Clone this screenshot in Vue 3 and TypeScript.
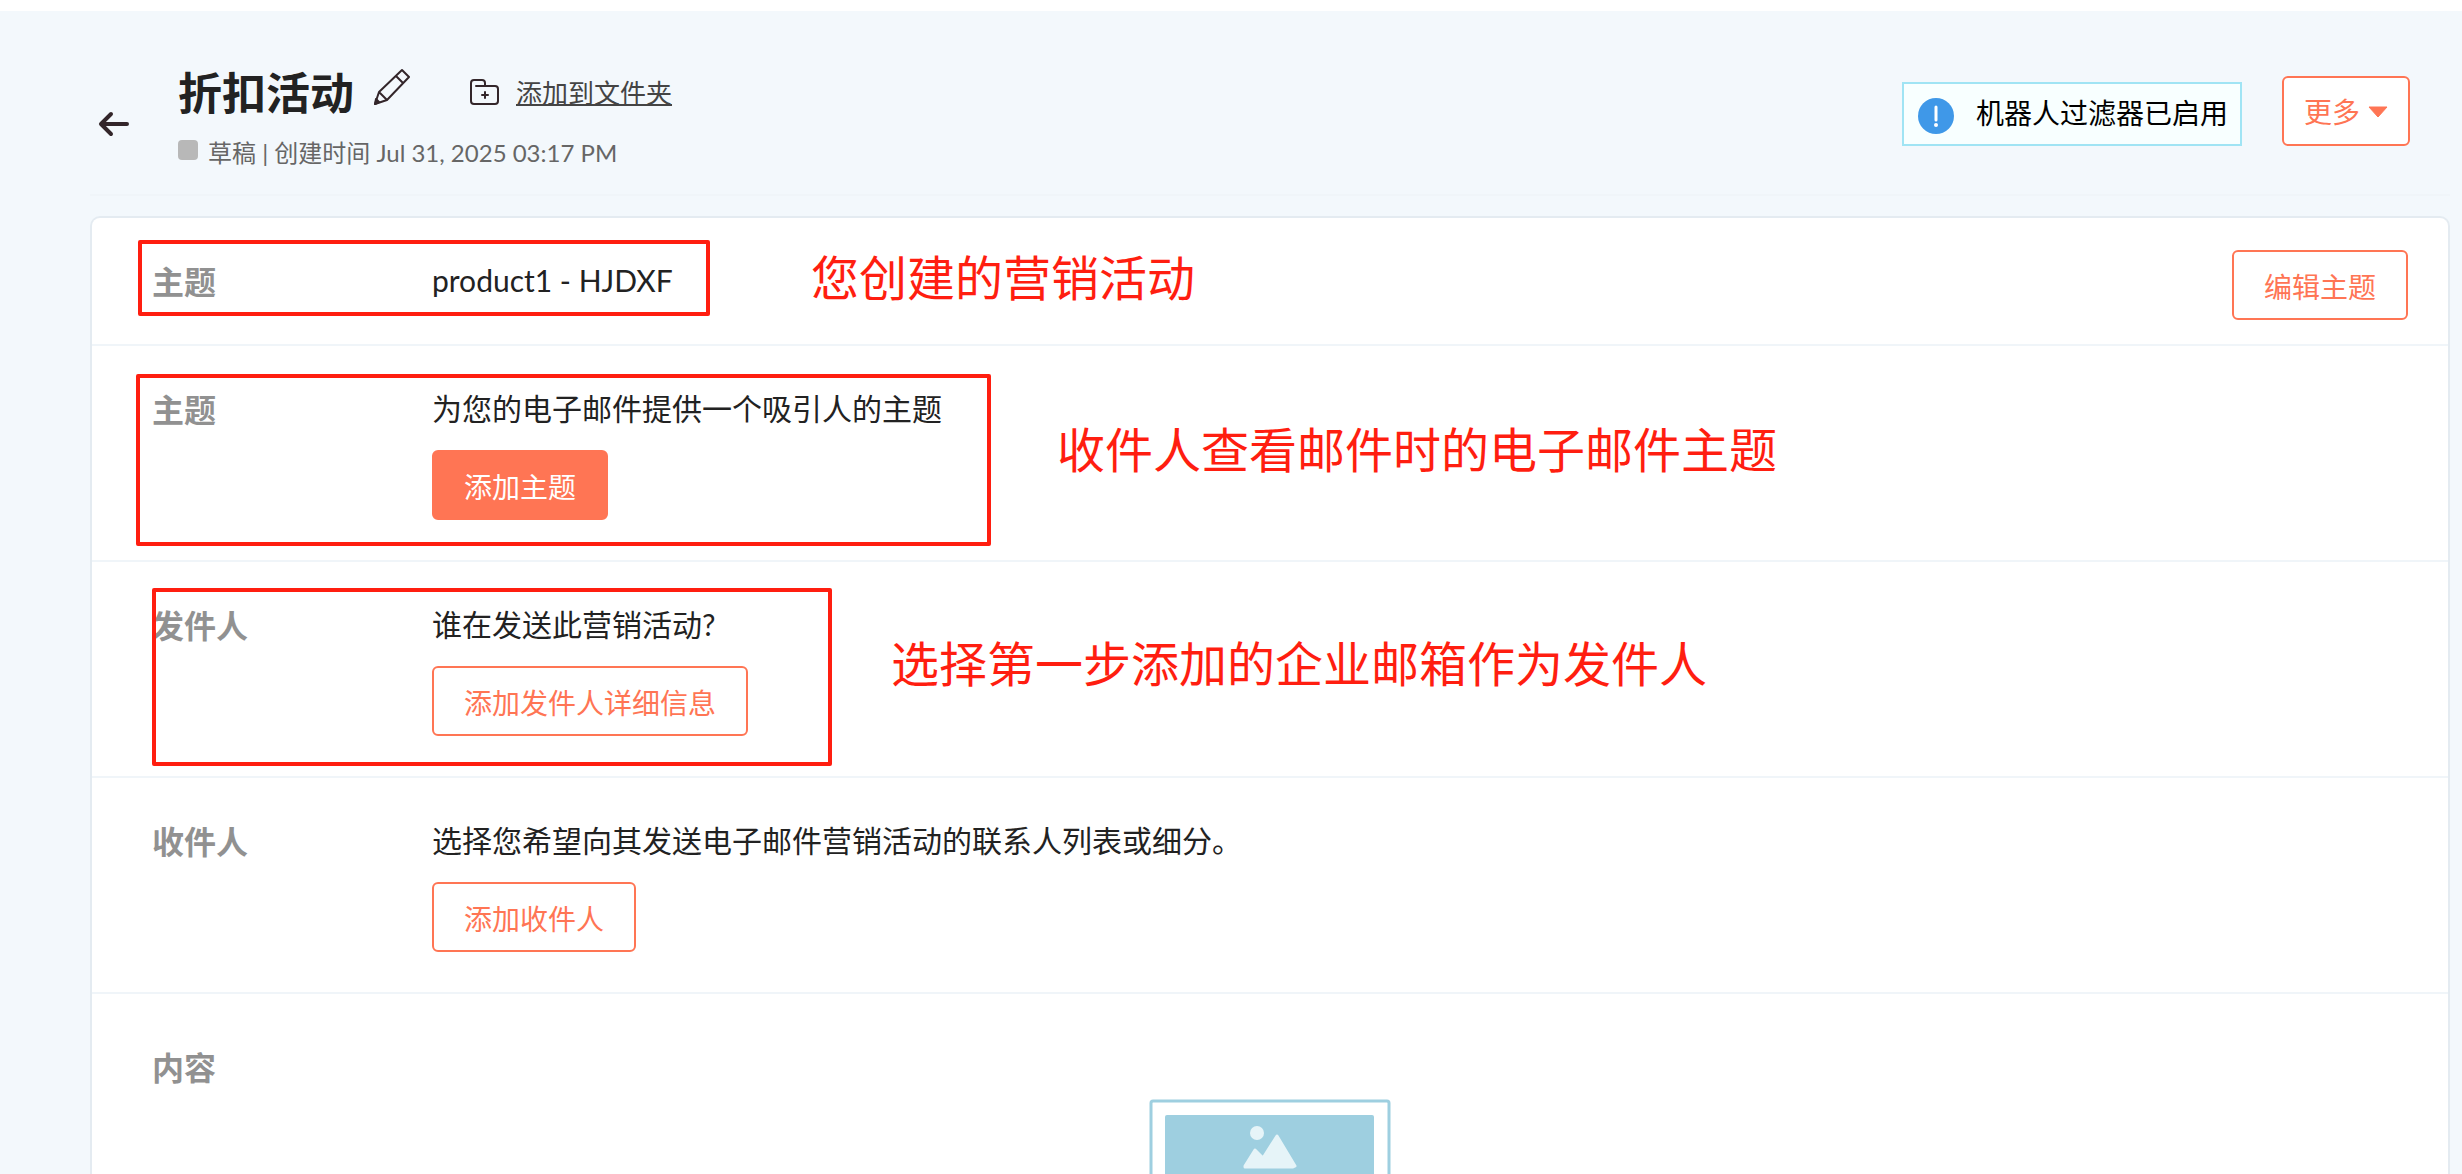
<script setup lang="ts">
interface Step {
  id: string
  label: string
  value: string
  action?: string
  primary?: boolean
  edit?: string
  note?: string
}

const steps: Step[] = [
  { id: 'topic', label: '主题', value: 'product1 - HJDXF', edit: '编辑主题', note: '您创建的营销活动' },
  { id: 'subject', label: '主题', value: '为您的电子邮件提供一个吸引人的主题', action: '添加主题', primary: true, note: '收件人查看邮件时的电子邮件主题' },
  { id: 'sender', label: '发件人', value: '谁在发送此营销活动?', action: '添加发件人详细信息', note: '选择第一步添加的企业邮箱作为发件人' },
  { id: 'recipients', label: '收件人', value: '选择您希望向其发送电子邮件营销活动的联系人列表或细分。', action: '添加收件人' },
]
</script>

<template>
  <div class="page">
    <header class="header">
      <button class="icon-button back" type="button" aria-label="返回">
        <svg width="32" height="28" viewBox="0 0 32 28" fill="none" stroke="#33262a" stroke-width="4" stroke-linecap="round" stroke-linejoin="round">
          <path d="M29 14H4M13 4 3 14l10 10" />
        </svg>
      </button>
      <div class="heading">
        <div class="title-row">
          <h1 class="title">折扣活动</h1>
          <button class="icon-button pencil" type="button" aria-label="编辑名称">
            <svg width="38" height="38" viewBox="0 0 38 38" fill="none" stroke="#33262a" stroke-width="2" stroke-linejoin="round">
              <path d="M1 36 5 24 28 2l7 7-22 23ZM5 24l8 8M22 8l7 7" />
              <path d="m1 36 4-2-3-3Z" fill="#33262a" />
            </svg>
          </button>
          <a class="folder" href="#">
            <svg width="30" height="28" viewBox="0 0 30 28" fill="none" stroke="#33262a" stroke-width="2" stroke-linecap="round" stroke-linejoin="round">
              <path d="M6 7h19q3 0 3 3v12q0 3-3 3H4q-3 0-3-3V4q0-3 3-3h8q3 0 3 3v3M15 13v6M12 16h6" />
            </svg>
            <span class="folder-text">添加到文件夹</span>
          </a>
        </div>
        <div class="meta">
          <span class="status"></span>
          <span>草稿 | 创建时间 Jul 31, 2025 03:17 PM</span>
        </div>
      </div>
      <div class="tools">
        <div class="filter">
          <svg width="36" height="36" viewBox="0 0 36 36">
            <circle cx="18" cy="18" r="18" fill="#3f98e8" />
            <path d="M18 9v13" stroke="#fff" stroke-width="3" stroke-linecap="round" />
            <circle cx="18" cy="27" r="2" fill="#fff" />
          </svg>
          <span class="filter-text">机器人过滤器已启用</span>
        </div>
        <button class="button more" type="button">
          更多
          <svg width="20" height="12" viewBox="0 0 20 12"><path d="M1 1h18l-9 10Z" fill="#ff7554" stroke="#ff7554" stroke-linejoin="round" /></svg>
        </button>
      </div>
    </header>

    <main class="card">
      <section v-for="step in steps" :key="step.id" class="step" :class="step.id">
        <h2 class="label">{{ step.label }}</h2>
        <div class="body">
          <p class="value">{{ step.value }}</p>
          <button v-if="step.action" class="button" :class="{ primary: step.primary }" type="button">{{ step.action }}</button>
        </div>
        <button v-if="step.edit" class="button" type="button">{{ step.edit }}</button>
        <template v-if="step.note">
          <span class="frame"></span>
          <span class="note">{{ step.note }}</span>
        </template>
      </section>
      <section class="content">
        <h2 class="label">内容</h2>
        <svg class="preview" width="242" height="160" viewBox="0 0 242 160">
          <rect x="2" y="2" width="238" height="200" rx="2" fill="#fff" stroke="#9ecfe0" stroke-width="3" />
          <rect x="16" y="16" width="209" height="120" rx="2" fill="#9ecfe0" />
          <circle cx="108" cy="34" r="7" fill="#e6f4f8" />
          <path d="M96 67 106 51l8 8 14-22 18 30-2 1H96Z" fill="#e6f4f8" stroke="#e6f4f8" stroke-width="3" stroke-linejoin="round" />
        </svg>
      </section>
    </main>
  </div>
</template>

<style>
body {
  margin: 0;
}
</style>

<style scoped>
.page {
  box-sizing: border-box;
  display: flex;
  flex-direction: column;
  height: 100vh;
  overflow: hidden;
  padding: 0 12px 0 90px;
  border-top: 11px solid #fff;
  background: #f3f8fc;
  color: #222;
  font-family: Lato, "Noto Sans CJK SC", sans-serif;
}
.header {
  display: flex;
  flex: none;
  align-items: flex-start;
  height: 183px;
  margin-bottom: 20px;
  border-bottom: 2px solid #f0f5f9;
}
.icon-button {
  display: flex;
  padding: 0;
  border: 0;
  background: none;
}
.back {
  width: 88px;
  padding: 99px 0 0 8px;
}
.heading {
  flex: 1;
  padding-top: 50px;
}
.title-row {
  display: flex;
  align-items: center;
  height: 64px;
}
.title {
  margin: 0;
  font-size: 44px;
  line-height: 64px;
  font-weight: 700;
}
.pencil {
  margin: 0 58px 12px 20px;
}
.folder {
  display: flex;
  align-items: center;
  gap: 16px;
  color: #444;
  font-size: 26px;
  line-height: 40px;
  text-decoration: none;
}
.folder-text {
  text-decoration: underline;
  text-decoration-thickness: 2px;
}
.meta {
  display: flex;
  align-items: center;
  gap: 10px;
  margin-top: 10px;
  color: #666;
  font-size: 24px;
  line-height: 36px;
}
.status {
  width: 20px;
  height: 20px;
  margin-bottom: 6px;
  border-radius: 4px;
  background: #b8b8b8;
}
.tools {
  display: flex;
  align-items: flex-end;
  gap: 40px;
  padding: 65px 40px 0 0;
}
.filter {
  box-sizing: border-box;
  display: flex;
  align-items: center;
  gap: 22px;
  height: 64px;
  padding: 0 12px 0 14px;
  border: 2px solid #a0e4f4;
  background: #f8ffff;
  color: #000;
  font-size: 28px;
}
.filter svg {
  margin-top: 4px;
}
.filter-text {
  padding-bottom: 4px;
}
.button {
  box-sizing: border-box;
  display: flex;
  flex: none;
  align-items: center;
  height: 70px;
  padding: 4px 30px 0;
  border: 2px solid #ff7554;
  border-radius: 6px;
  background: #fff;
  color: #ff7554;
  font-family: inherit;
  font-size: 28px;
  line-height: 40px;
}
.primary {
  background: #ff7554;
  color: #fff;
}
.more {
  gap: 8px;
  padding: 2px 20px 0;
}
.card {
  display: flex;
  flex: 1;
  flex-direction: column;
  border: 2px solid #e4ebf1;
  border-bottom: 0;
  border-radius: 10px 10px 0 0;
  background: #fff;
}
.step {
  position: relative;
  display: flex;
  align-items: flex-start;
  padding: 32px 40px 40px 60px;
  border-bottom: 2px solid #f0f5f9;
}
.topic {
  padding-bottom: 24px;
}
.label {
  width: 280px;
  margin: 0;
  padding-top: 8px;
  color: #919191;
  font-size: 32px;
  line-height: 48px;
  font-weight: 700;
}
.body {
  display: flex;
  flex: 1;
  flex-direction: column;
  align-items: flex-start;
  gap: 18px;
  padding-top: 6px;
}
.value {
  margin: 0;
  font-size: 30px;
  line-height: 48px;
}
.frame {
  position: absolute;
  box-sizing: border-box;
  border: 4px solid #ff1e10;
  border-radius: 2px;
}
.note {
  position: absolute;
  color: #ff1e10;
  font-size: 48px;
  line-height: 64px;
  white-space: nowrap;
}
.topic .frame {
  top: 22px;
  left: 46px;
  width: 572px;
  height: 76px;
}
.topic .note {
  top: 28px;
  left: 719px;
}
.subject .frame {
  top: 28px;
  left: 44px;
  width: 855px;
  height: 172px;
}
.subject .note {
  top: 72px;
  left: 965px;
}
.sender .frame {
  top: 26px;
  left: 60px;
  width: 680px;
  height: 178px;
}
.sender .note {
  top: 70px;
  left: 799px;
}
.content {
  display: flex;
  flex-direction: column;
  padding: 42px 60px 0;
}
.preview {
  align-self: center;
  margin-top: 7px;
}
</style>
